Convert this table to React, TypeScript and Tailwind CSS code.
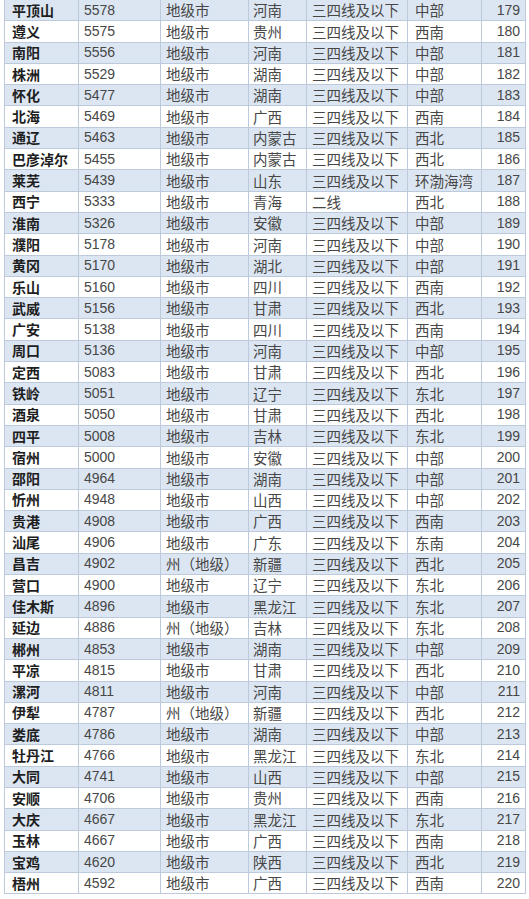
const rows: [string, string, string, string, string, string, string][] = [
  ["平顶山", "5578", "地级市", "河南", "三四线及以下", "中部", "179"],
  ["遵义", "5575", "地级市", "贵州", "三四线及以下", "西南", "180"],
  ["南阳", "5556", "地级市", "河南", "三四线及以下", "中部", "181"],
  ["株洲", "5529", "地级市", "湖南", "三四线及以下", "中部", "182"],
  ["怀化", "5477", "地级市", "湖南", "三四线及以下", "中部", "183"],
  ["北海", "5469", "地级市", "广西", "三四线及以下", "西南", "184"],
  ["通辽", "5463", "地级市", "内蒙古", "三四线及以下", "西北", "185"],
  ["巴彦淖尔", "5455", "地级市", "内蒙古", "三四线及以下", "西北", "186"],
  ["莱芜", "5439", "地级市", "山东", "三四线及以下", "环渤海湾", "187"],
  ["西宁", "5333", "地级市", "青海", "二线", "西北", "188"],
  ["淮南", "5326", "地级市", "安徽", "三四线及以下", "中部", "189"],
  ["濮阳", "5178", "地级市", "河南", "三四线及以下", "中部", "190"],
  ["黄冈", "5170", "地级市", "湖北", "三四线及以下", "中部", "191"],
  ["乐山", "5160", "地级市", "四川", "三四线及以下", "西南", "192"],
  ["武威", "5156", "地级市", "甘肃", "三四线及以下", "西北", "193"],
  ["广安", "5138", "地级市", "四川", "三四线及以下", "西南", "194"],
  ["周口", "5136", "地级市", "河南", "三四线及以下", "中部", "195"],
  ["定西", "5083", "地级市", "甘肃", "三四线及以下", "西北", "196"],
  ["铁岭", "5051", "地级市", "辽宁", "三四线及以下", "东北", "197"],
  ["酒泉", "5050", "地级市", "甘肃", "三四线及以下", "西北", "198"],
  ["四平", "5008", "地级市", "吉林", "三四线及以下", "东北", "199"],
  ["宿州", "5000", "地级市", "安徽", "三四线及以下", "中部", "200"],
  ["邵阳", "4964", "地级市", "湖南", "三四线及以下", "中部", "201"],
  ["忻州", "4948", "地级市", "山西", "三四线及以下", "中部", "202"],
  ["贵港", "4908", "地级市", "广西", "三四线及以下", "西南", "203"],
  ["汕尾", "4906", "地级市", "广东", "三四线及以下", "东南", "204"],
  ["昌吉", "4902", "州（地级）", "新疆", "三四线及以下", "西北", "205"],
  ["营口", "4900", "地级市", "辽宁", "三四线及以下", "东北", "206"],
  ["佳木斯", "4896", "地级市", "黑龙江", "三四线及以下", "东北", "207"],
  ["延边", "4886", "州（地级）", "吉林", "三四线及以下", "东北", "208"],
  ["郴州", "4853", "地级市", "湖南", "三四线及以下", "中部", "209"],
  ["平凉", "4815", "地级市", "甘肃", "三四线及以下", "西北", "210"],
  ["漯河", "4811", "地级市", "河南", "三四线及以下", "中部", "211"],
  ["伊犁", "4787", "州（地级）", "新疆", "三四线及以下", "西北", "212"],
  ["娄底", "4786", "地级市", "湖南", "三四线及以下", "中部", "213"],
  ["牡丹江", "4766", "地级市", "黑龙江", "三四线及以下", "东北", "214"],
  ["大同", "4741", "地级市", "山西", "三四线及以下", "中部", "215"],
  ["安顺", "4706", "地级市", "贵州", "三四线及以下", "西南", "216"],
  ["大庆", "4667", "地级市", "黑龙江", "三四线及以下", "东北", "217"],
  ["玉林", "4667", "地级市", "广西", "三四线及以下", "西南", "218"],
  ["宝鸡", "4620", "地级市", "陕西", "三四线及以下", "西北", "219"],
  ["梧州", "4592", "地级市", "广西", "三四线及以下", "西南", "220"],
];

const cell = "h-[21.3px] flex items-center border-r border-b border-[#bccadb] overflow-hidden whitespace-nowrap";
const cjk = "font-['Noto_Sans_CJK_SC',sans-serif] text-[14.5px] text-[#474747]";
const num = "font-['Liberation_Sans',sans-serif] text-[14px] text-[#474747]";

export default function App() {
  return (
    <div className="w-[529px] h-[899px] bg-white overflow-hidden">
      <div className="ml-[4px] w-[521px] border-l border-[#bccadb] grid grid-cols-[74px_82px_88px_58px_101px_74px_44px]">
        {rows.map((r, i) => {
          const bg = i % 2 === 0 ? "bg-[#dce6f2]" : "bg-white";
          return (
            <div key={i} className="contents">
              <div className={`${cell} ${bg} pl-[7px] font-['Noto_Sans_CJK_SC',sans-serif] text-[14px] font-bold text-[#1e1e1e]`}>{r[0]}</div>
              <div className={`${cell} ${bg} pl-[5px] ${num}`}>{r[1]}</div>
              <div className={`${cell} ${bg} pl-[5px] ${cjk}`}>{r[2]}</div>
              <div className={`${cell} ${bg} pl-[4px] ${cjk}`}>{r[3]}</div>
              <div className={`${cell} ${bg} pl-[5px] ${cjk}`}>{r[4]}</div>
              <div className={`${cell} ${bg} pl-[7px] ${cjk}`}>{r[5]}</div>
              <div className={`${cell} ${bg} justify-end pr-[5px] ${num}`}>{r[6]}</div>
            </div>
          );
        })}
      </div>
    </div>
  );
}
